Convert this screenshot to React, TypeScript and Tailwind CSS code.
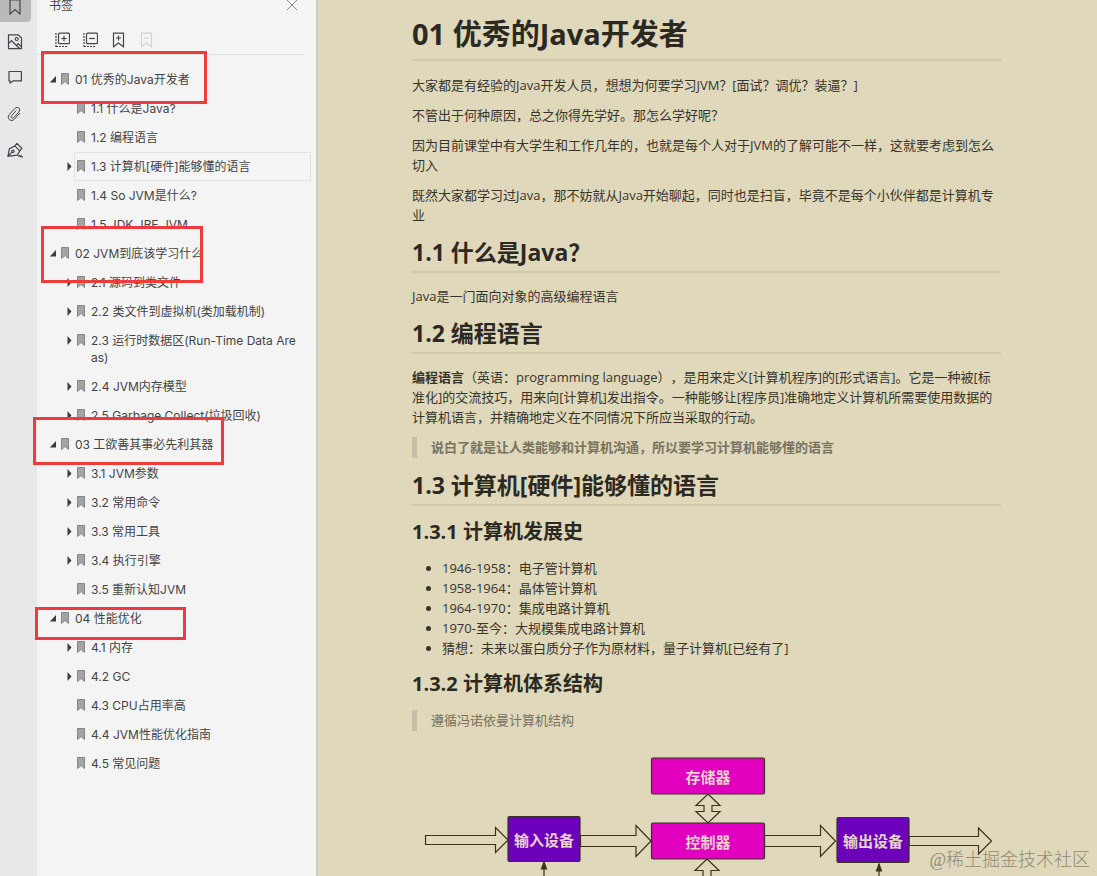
import type { ReactNode } from "react";

type Chapter = {
  title: string;
  frame: string;
  items: { title: string; nested?: boolean; active?: boolean }[];
};

const CHAPTERS: Chapter[] = [
  {
    title: "01 优秀的Java开发者",
    frame: "left-[4px] -top-[14px] h-[53px] w-[166px]",
    items: [
      { title: "1.1 什么是Java?" },
      { title: "1.2 编程语言" },
      { title: "1.3 计算机[硬件]能够懂的语言", nested: true, active: true },
      { title: "1.4 So JVM是什么?" },
      { title: "1.5 JDK JRE JVM" },
    ],
  },
  {
    title: "02 JVM到底该学习什么",
    frame: "left-[4px] -top-[13px] h-[57px] w-[162px]",
    items: [
      { title: "2.1 源码到类文件", nested: true },
      { title: "2.2 类文件到虚拟机(类加载机制)", nested: true },
      { title: "2.3 运行时数据区(Run-Time Data Areas)", nested: true },
      { title: "2.4 JVM内存模型", nested: true },
      { title: "2.5 Garbage Collect(垃圾回收)", nested: true },
    ],
  },
  {
    title: "03 工欲善其事必先利其器",
    frame: "-left-[4px] -top-[13px] h-[48px] w-[191px]",
    items: [
      { title: "3.1 JVM参数", nested: true },
      { title: "3.2 常用命令", nested: true },
      { title: "3.3 常用工具", nested: true },
      { title: "3.4 执行引擎", nested: true },
      { title: "3.5 重新认知JVM" },
    ],
  },
  {
    title: "04 性能优化",
    frame: "-left-[2px] top-[3px] h-[33px] w-[151px]",
    items: [
      { title: "4.1 内存", nested: true },
      { title: "4.2 GC", nested: true },
      { title: "4.3 CPU占用率高" },
      { title: "4.4 JVM性能优化指南" },
      { title: "4.5 常见问题" },
    ],
  },
];

const HISTORY = [
  "1946-1958：电子管计算机",
  "1958-1964：晶体管计算机",
  "1964-1970：集成电路计算机",
  "1970-至今：大规模集成电路计算机",
  "猜想：未来以蛋白质分子作为原材料，量子计算机[已经有了]",
];

const Icon = ({ children, className = "" }: { children: ReactNode; className?: string }) => (
  <svg
    viewBox="0 0 16 16"
    className={`size-4 ${className}`}
    fill="none"
    stroke="currentColor"
    strokeWidth="1.2"
    aria-hidden="true"
  >
    {children}
  </svg>
);

const RAIL = [
  {
    label: "缩略图",
    icon: (
      <>
        <path d="M1.500.8h9.800l3.200 3.200v10.700h-13z" />
        <path d="M1.500 9.500 4.500 6.500l8 8M9.500 11.500l1.800-1.800 3.200 3.200" />
        <circle cx="9.700" cy="5" r="1.500" />
      </>
    ),
  },
  { label: "批注", icon: <path d="M2 1.500h12.400v9.400H6l-3 2.200v-2.200H2z" strokeLinejoin="round" /> },
  {
    label: "附件",
    icon: (
      <path
        d="M12.800 7.300 7.600 13c-1.500 1.600-3.700 2-5.200.7S.9 10 2.400 8.400l5.200-5.700C8.900 1.300 10.600 1 11.800 2s1.200 2.800 0 4.100l-5 5.500c-.7.8-1.600.9-2.200.3s-.6-1.500.1-2.200l4.300-4.800"
        strokeWidth="1"
        strokeLinecap="round"
      />
    ),
  },
  {
    label: "签名",
    icon: (
      <>
        <path d="m.9 14.300 1.500-7.600 5.500-2.800 4.900 4.900-2.500 4.300zM1.200 14l3.900-3.900" />
        <path d="m7.900 3.900 2-2.500 5 5-2.100 2.400M11.300 14.500c.8-1.500 1.700-1.500 1.700-.5 0 1.100.9.900 1.300.1.200.8.700 1 1.500.8" />
        <circle cx="6" cy="9.200" r="1.200" />
      </>
    ),
  },
];

const Rail = () => (
  <nav className="flex w-[37px] shrink-0 flex-col bg-[#e8e8e8] text-[#41454e]">
    <button aria-label="书签" className="flex h-[22px] w-[31px] items-end justify-center rounded-br-[4px] bg-[#bababa] pr-[2px] pb-[7px]">
      <Icon className="shrink-0">
        <path d="M3 1h10v14L8 10.500l-5 4.500z" />
      </Icon>
    </button>
    <div className="flex flex-col gap-5 pt-3 pl-[7px]">
      {RAIL.map(({ label, icon }) => (
        <button key={label} aria-label={label} className="w-4">
          <Icon>{icon}</Icon>
        </button>
      ))}
    </div>
  </nav>
);

const BookmarkGlyph = () => (
  <svg viewBox="0 0 8 12" className="mt-[2px] h-3 w-2 shrink-0" aria-hidden="true">
    <path d="M.5.5h7v11L4 8.500.5 11.500z" fill="#a4a4a4" stroke="#868686" />
  </svg>
);

const Row = ({
  title,
  open,
  nested,
  active,
  child,
}: {
  title: string;
  open?: boolean;
  nested?: boolean;
  active?: boolean;
  child?: boolean;
}) => (
  <button className={`flex w-full pr-[5px] text-left ${child ? "pl-[28px]" : "pl-[12px]"}`}>
    <svg viewBox="0 0 9 29" className="h-[29px] w-[9px] shrink-0" fill="#3c3c3c" aria-hidden="true">
      {open && <path d="M7 11v6.500H.8z" />}
      {nested && <path d="M2.500 10v9l4-4.500z" />}
    </svg>
    <span
      className={`flex min-w-0 flex-1 gap-[6px] border py-[5px] pr-[9px] pl-[2px] ${
        active ? "border-[#e2e2e2]" : "border-transparent"
      }`}
    >
      <BookmarkGlyph />
      <span className="min-w-0 break-all">{title}</span>
    </span>
  </button>
);

const TOOLS = [
  {
    label: "展开",
    className: "text-[#444]",
    icon: (
      <>
        <rect x="4.500" y="1.200" width="11" height="10.500" rx="1.200" />
        <path d="M10 3.700v5.500M7.200 6.500h5.600" />
        <path d="M2 1v14M2 14.500H13" strokeDasharray="2 1" />
      </>
    ),
  },
  {
    label: "折叠",
    className: "text-[#444]",
    icon: (
      <>
        <rect x="4.500" y="1.200" width="11" height="10.500" rx="1.200" />
        <path d="M7.200 6.500h5.600" />
        <path d="M2 1v14M2 14.500H13" strokeDasharray="2 1" />
      </>
    ),
  },
  { label: "添加书签", className: "text-[#444]", icon: <path d="M3.500 1.200h10v13.500l-5-3.700-5 3.700zM8.500 3.500v5M6 6h5" /> },
  { label: "删除书签", className: "text-[#d2d2d2]", icon: <path d="M3.500 1.200h10v13.500l-5-3.700-5 3.700zM6 6h5" /> },
];

const Outline = () => (
  <aside className="w-[281px] shrink-0 border-r-2 border-[#cdcdd1] bg-[#f4f4f4] font-['Inter','Noto_Sans_CJK_SC',sans-serif] text-[12px] leading-[17px] text-[#444]">
    <header className="flex h-[10px] items-center justify-between pr-[18px] pl-3">
      <h2>书签</h2>
      <button aria-label="关闭" className="text-[#888]">
        <svg viewBox="0 0 12 12" className="size-3" fill="none" stroke="currentColor" aria-hidden="true">
          <path d="m1 1 10 10M11 1 1 11" />
        </svg>
      </button>
    </header>
    <div className="mr-3 flex gap-3 border-b border-[#e0e0e0] pt-[22px] pb-[6px] pl-[17px]">
      {TOOLS.map(({ label, className, icon }) => (
        <button key={label} aria-label={label} className={className}>
          <Icon>{icon}</Icon>
        </button>
      ))}
    </div>
    <ul className="pt-[10px]">
      {CHAPTERS.map((chapter) => (
        <li key={chapter.title}>
          <div className="relative">
            <Row title={chapter.title} open />
            <span className={`pointer-events-none absolute z-10 border-3 border-[#ee3b3b] ${chapter.frame}`} />
          </div>
          <ul>
            {chapter.items.map((item) => (
              <li key={item.title}>
                <Row {...item} child />
              </li>
            ))}
          </ul>
        </li>
      ))}
    </ul>
  </aside>
);

const Section = ({ children }: { children: ReactNode }) => (
  <h2 className="my-[13px] border-b-2 border-[#d0c8ac] pb-[5px] text-[23px] leading-[28px] font-bold text-[#2c2922]">
    {children}
  </h2>
);

const SubSection = ({ children }: { children: ReactNode }) => (
  <h3 className="my-[14px] text-[20px] leading-[24px] font-bold text-[#2c2922]">{children}</h3>
);

const Diagram = () => (
  <svg
    viewBox="412 752 589 150"
    className="mt-[21px] w-full font-['Noto_Sans_CJK_SC',sans-serif] text-[15px] font-bold"
    fill="none"
    stroke="#38331f"
    strokeWidth="1.200"
  >
    <path d="M425.500 835.500h70v-8l12.500 12.500-12.500 12.500v-8h-70z" />
    <path d="M580.500 835.500h55.500v-10l15 15.500-15 15.500v-10h-55.500z" />
    <path d="M764.500 835.500h56v-10l15 15.500-15 15.500v-10h-56z" />
    <path d="M909 836.500h69.500v-8.500l13 13-13 13v-8.500H909z" />
    <path d="m708 794 12 11.500h-8v6h8L708 823l-12-11.500h8v-6h-8z" />
    <path d="m707 859 12 11.500h-8V902h-8v-31.500h-8z" />
    <path d="M544 902v-38M879 902v-38" />
    <path d="m544 862-2.500 7h5zM879 864l-2.500 7h5z" fill="#38331f" />
    <rect x="651.500" y="758" width="113" height="36" rx="1.500" fill="#e000bd" />
    <rect x="651.500" y="823" width="113" height="36" rx="1.500" fill="#e000bd" />
    <rect x="508" y="816.500" width="72" height="45" rx="1.500" fill="#6c00bb" />
    <rect x="837" y="817.500" width="72" height="45" rx="1.500" fill="#6c00bb" />
    <g fill="#e6d3cb" stroke="none" textAnchor="middle">
      <text x="708" y="783">存储器</text>
      <text x="708" y="848">控制器</text>
      <text x="544" y="846">输入设备</text>
      <text x="873" y="847">输出设备</text>
    </g>
  </svg>
);

const Article = () => (
  <main className="min-w-0 flex-1 bg-[#dfd8bb] pt-4 pr-24 pl-[94px] font-['Open_Sans','Noto_Sans_CJK_SC',sans-serif] text-[13px] leading-[20px] text-[#38342b] [text-spacing-trim:space-all]">
    <h1 className="mb-[14px] border-b-2 border-[#d0c8ac] pb-[7px] text-[29px] leading-[36px] font-bold text-[#2c2922]">
      01 优秀的Java开发者
    </h1>
    <div className="space-y-[10px]">
      <p>大家都是有经验的Java开发人员，想想为何要学习JVM？[面试？调优？装逼？]</p>
      <p>不管出于何种原因，总之你得先学好。那怎么学好呢？</p>
      <p>因为目前课堂中有大学生和工作几年的，也就是每个人对于JVM的了解可能不一样，这就要考虑到怎么切入</p>
      <p>既然大家都学习过Java，那不妨就从Java开始聊起，同时也是扫盲，毕竟不是每个小伙伴都是计算机专业</p>
    </div>
    <Section>1.1 什么是Java？</Section>
    <p>Java是一门面向对象的高级编程语言</p>
    <Section>1.2 编程语言</Section>
    <p>
      <strong>编程语言</strong>
      （英语：programming language），是用来定义[计算机程序]的[形式语言]。它是一种被[标准化]的交流技巧，用来向[计算机]发出指令。一种能够让[程序员]准确地定义计算机所需要使用数据的计算机语言，并精确地定义在不同情况下所应当采取的行动。
    </p>
    <blockquote className="mt-[10px] border-l-5 border-[#c5bda9] pl-[14px] leading-[21px] font-bold text-[#777260]">
      说白了就是让人类能够和计算机沟通，所以要学习计算机能够懂的语言
    </blockquote>
    <Section>1.3 计算机[硬件]能够懂的语言</Section>
    <SubSection>1.3.1 计算机发展史</SubSection>
    <ul className="list-disc pl-[30px]">
      {HISTORY.map((line) => (
        <li key={line}>{line}</li>
      ))}
    </ul>
    <SubSection>1.3.2 计算机体系结构</SubSection>
    <blockquote className="border-l-5 border-[#c5bda9] pl-[14px] leading-[21px] text-[#777260]">
      遵循冯诺依曼计算机结构
    </blockquote>
    <Diagram />
  </main>
);

export default function App() {
  return (
    <div className="relative flex h-screen overflow-hidden">
      <Rail />
      <Outline />
      <Article />
      <span className="absolute right-[7px] bottom-[4px] font-['Liberation_Serif','Noto_Sans_CJK_SC',serif] text-[18px] leading-[24px] font-light text-[#8f8a79]">
        @稀土掘金技术社区
      </span>
    </div>
  );
}
